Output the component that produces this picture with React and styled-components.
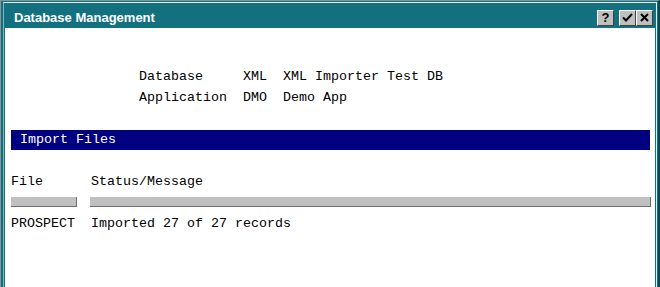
import React from 'react';
import styled, { createGlobalStyle } from 'styled-components';

const Global = createGlobalStyle`
  html, body { margin: 0; padding: 0; background: #ffffff; }
  body { width: 660px; height: 287px; overflow: hidden; }
`;

const info = [
  { label: 'Database', code: 'XML', name: 'XML Importer Test DB' },
  { label: 'Application', code: 'DMO', name: 'Demo App' },
];

const files = [{ file: 'PROSPECT', status: 'Imported 27 of 27 records' }];

function App() {
  return (
    <>
      <Global />
      <Window>
        <Frame>
          <TitleBar>
            <Title>Database Management</Title>
            <Buttons>
              <TitleButton>?</TitleButton>
              <ButtonPair>
                <TitleButton>
                  <svg width="11" height="9" viewBox="0 0 11 9">
                    <path d="M1 4.5 L4 7.5 L10 1" fill="none" stroke="#000" strokeWidth="2" />
                  </svg>
                </TitleButton>
                <TitleButton>
                  <svg width="9" height="9" viewBox="0 0 9 9">
                    <path d="M1 1 L8 8 M8 1 L1 8" fill="none" stroke="#000" strokeWidth="2" />
                  </svg>
                </TitleButton>
              </ButtonPair>
            </Buttons>
          </TitleBar>
          <Body>
            <InfoTable>
              {info.map((row) => (
                <React.Fragment key={row.label}>
                  <span>{row.label}</span>
                  <span>{row.code}</span>
                  <span>{row.name}</span>
                </React.Fragment>
              ))}
            </InfoTable>
            <SectionBar>Import Files</SectionBar>
            <FileGrid>
              <span>File</span>
              <span>Status/Message</span>
              <ColumnBar $width="66px" />
              <ColumnBar $shift />
              {files.map((f) => (
                <React.Fragment key={f.file}>
                  <RowCell>{f.file}</RowCell>
                  <RowCell>{f.status}</RowCell>
                </React.Fragment>
              ))}
            </FileGrid>
          </Body>
        </Frame>
      </Window>
    </>
  );
}

export default App;

const Window = styled.div`
  box-sizing: border-box;
  width: 660px;
  height: 287px;
  overflow: hidden;
  background: #13707f;
  border-top: 1px solid #8a9498;
  border-left: 1px solid #8a9498;
  border-right: 2px solid #0a4756;
  padding: 1px 1px 0 2px;
`;

const Frame = styled.div`
  height: 100%;
  border-top: 1px solid #e6f0f2;
  border-left: 1px solid #7fb4bf;
  border-right: 1px solid #e6f0f2;
  padding: 2px 1px 0 1px;
  display: flex;
  flex-direction: column;
  background: #13707f;
`;

const TitleBar = styled.div`
  height: 23px;
  display: flex;
  align-items: center;
  justify-content: space-between;
  padding: 0 2px 0 9px;
  flex-shrink: 0;
`;

const Title = styled.span`
  font-family: 'Liberation Sans', Arial, sans-serif;
  font-weight: bold;
  font-size: 13px;
  color: #ffffff;
  margin-top: 1px;
`;

const Buttons = styled.div`
  display: flex;
  align-items: center;
  gap: 5px;
  margin-top: 2px;
`;

const ButtonPair = styled.div`
  display: flex;
`;

const TitleButton = styled.div`
  box-sizing: border-box;
  width: 17px;
  height: 16px;
  background: #c0c0c0;
  border-top: 1px solid #ffffff;
  border-left: 1px solid #ffffff;
  border-right: 1px solid #404040;
  border-bottom: 1px solid #404040;
  display: flex;
  align-items: center;
  justify-content: center;
  font-family: 'Liberation Sans', Arial, sans-serif;
  font-weight: bold;
  font-size: 13px;
  color: #000;
  line-height: 1;
`;

const Body = styled.div`
  flex: 1;
  background: #ffffff;
  padding: 38px 4px 0 6px;
  font-family: 'Liberation Mono', 'Courier New', monospace;
  font-size: 13.33px;
  color: #000;
`;

const InfoTable = styled.div`
  display: grid;
  grid-template-columns: 88px 24px auto;
  column-gap: 16px;
  justify-content: start;
  margin-left: 128px;
  line-height: 21px;
  white-space: pre;
`;

const SectionBar = styled.div`
  margin-top: 22px;
  height: 20px;
  line-height: 20px;
  background: #000080;
  color: #ffffff;
  padding-left: 9px;
  margin-right: 1px;
`;

const FileGrid = styled.div`
  display: grid;
  grid-template-columns: 80px 1fr;
  margin-top: 21px;
  line-height: 21px;
  white-space: pre;
`;

const ColumnBar = styled.div`
  box-sizing: border-box;
  margin-top: 5px;
  height: 10px;
  width: ${(p) => p.$width || 'auto'};
  margin-left: ${(p) => (p.$shift ? '-1px' : '0')};
  background: #c0c0c0;
  border-right: 1px solid #6e6e6e;
  border-bottom: 1px solid #6e6e6e;
`;

const RowCell = styled.span`
  margin-top: 6px;
`;
